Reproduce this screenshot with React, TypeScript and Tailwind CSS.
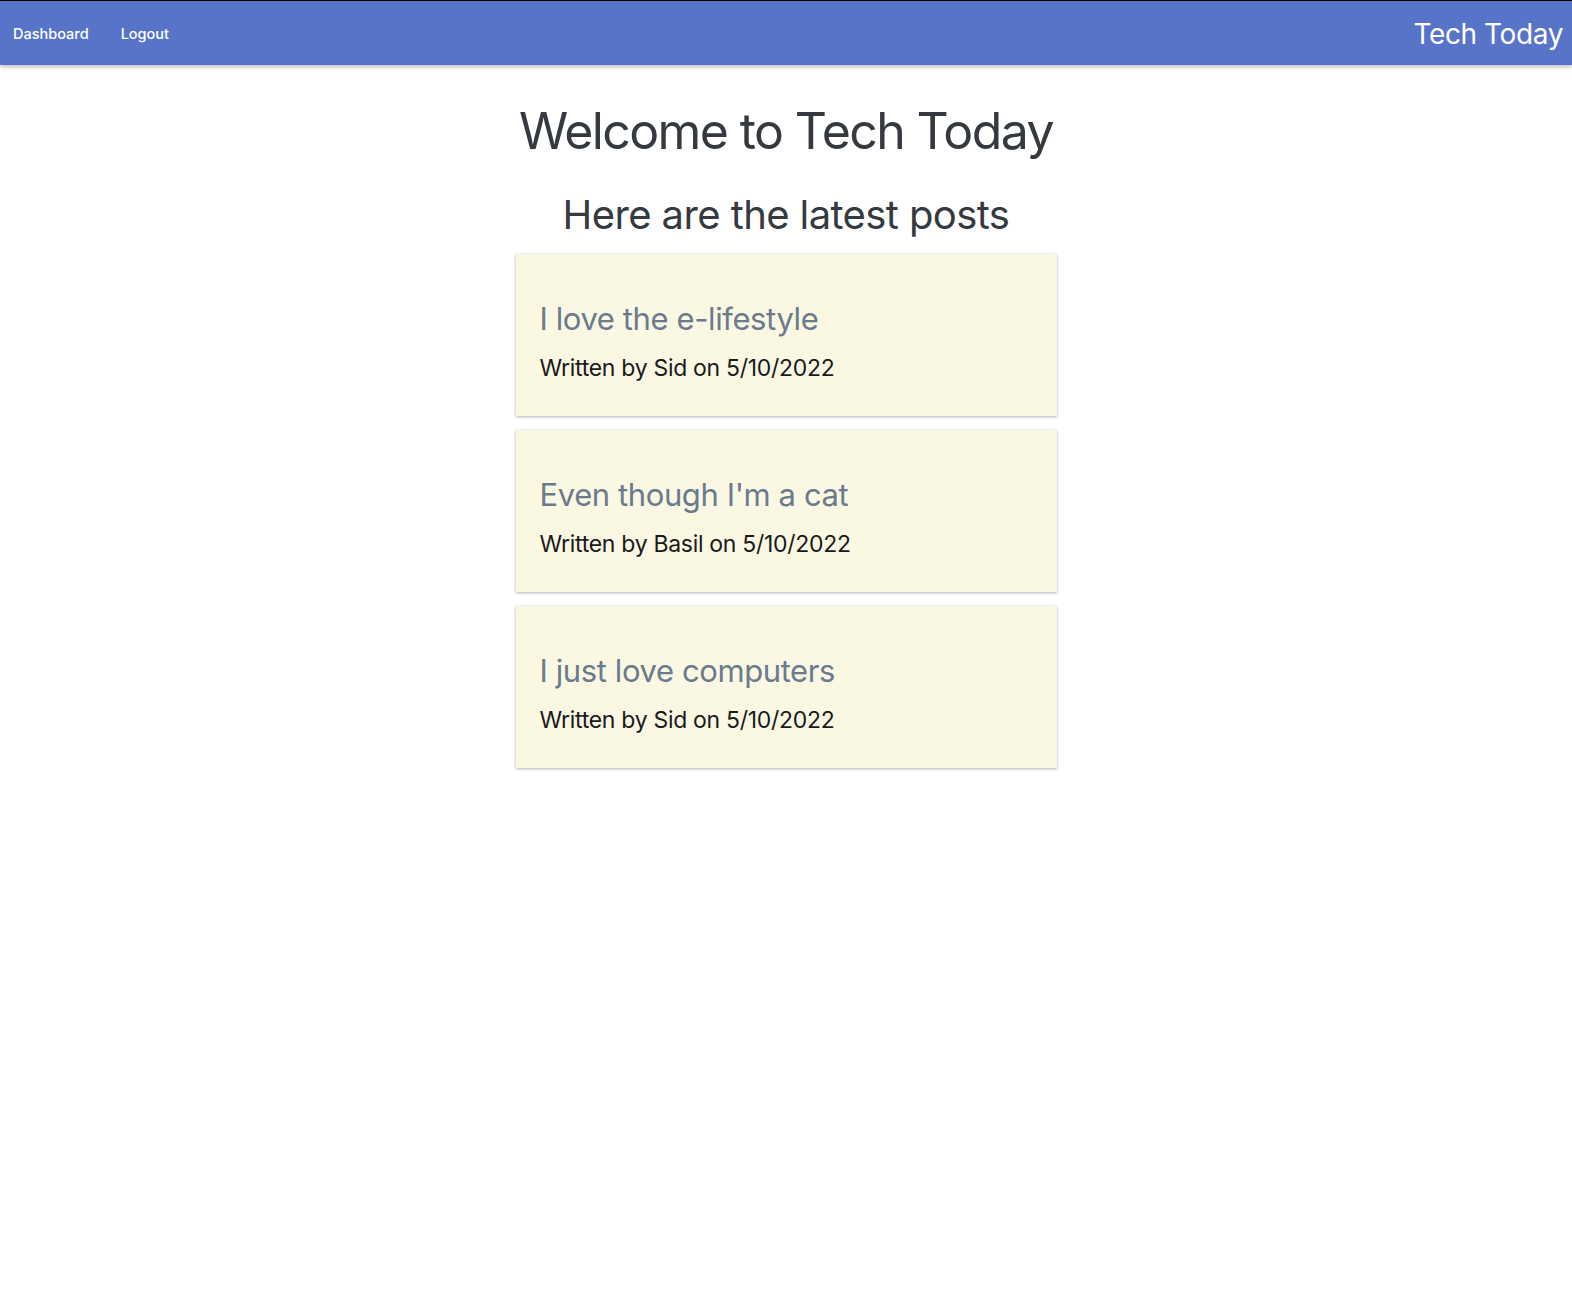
import React from "react";

const posts = [
  { title: "I love the e-lifestyle", author: "Sid", date: "5/10/2022" },
  { title: "Even though I'm a cat", author: "Basil", date: "5/10/2022" },
  { title: "I just love computers", author: "Sid", date: "5/10/2022" },
];

export default function App() {
  return (
    <div
      className="min-h-[1303px] bg-white border-t border-black"
      style={{ fontFamily: "Inter, 'Noto Sans', sans-serif" }}
    >
      <nav className="h-[64px] bg-[#5874c9] flex items-center justify-between shadow-[0_2px_4px_rgba(0,0,0,0.25)] pl-[13px] pr-[9px]">
        <div className="flex items-center gap-[32px] text-white text-[14.5px] font-medium pt-[1px]">
          <a>Dashboard</a>
          <a>Logout</a>
        </div>
        <div className="text-white text-[28px] tracking-[-0.4px] pt-[1px]">Tech Today</div>
      </nav>
      <main className="flex flex-col items-center">
        <h1 className="mt-[36px] text-[50px] leading-[1.2] text-[#343a40] tracking-[-1.6px]">
          Welcome to Tech Today
        </h1>
        <h2 className="mt-[30px] text-[40px] leading-[1.2] text-[#343a40] tracking-[-0.6px]">
          Here are the latest posts
        </h2>
        <div className="mt-[15px] w-[541px] flex flex-col gap-[14px]">
          {posts.map((p) => (
            <div
              key={p.title}
              className="h-[162px] bg-[#faf8e3] shadow-[0_1px_3px_rgba(0,0,0,0.3)] px-[24px] flex flex-col justify-center pt-[13px]"
            >
              <div className="text-[31px] leading-[1.2] text-[#6b7b8c] tracking-[-0.4px]">{p.title}</div>
              <div className="mt-[18px] text-[23px] leading-[1.2] text-[#1a1a1a] tracking-[-0.3px]">
                Written by {p.author} on {p.date}
              </div>
            </div>
          ))}
        </div>
      </main>
    </div>
  );
}
